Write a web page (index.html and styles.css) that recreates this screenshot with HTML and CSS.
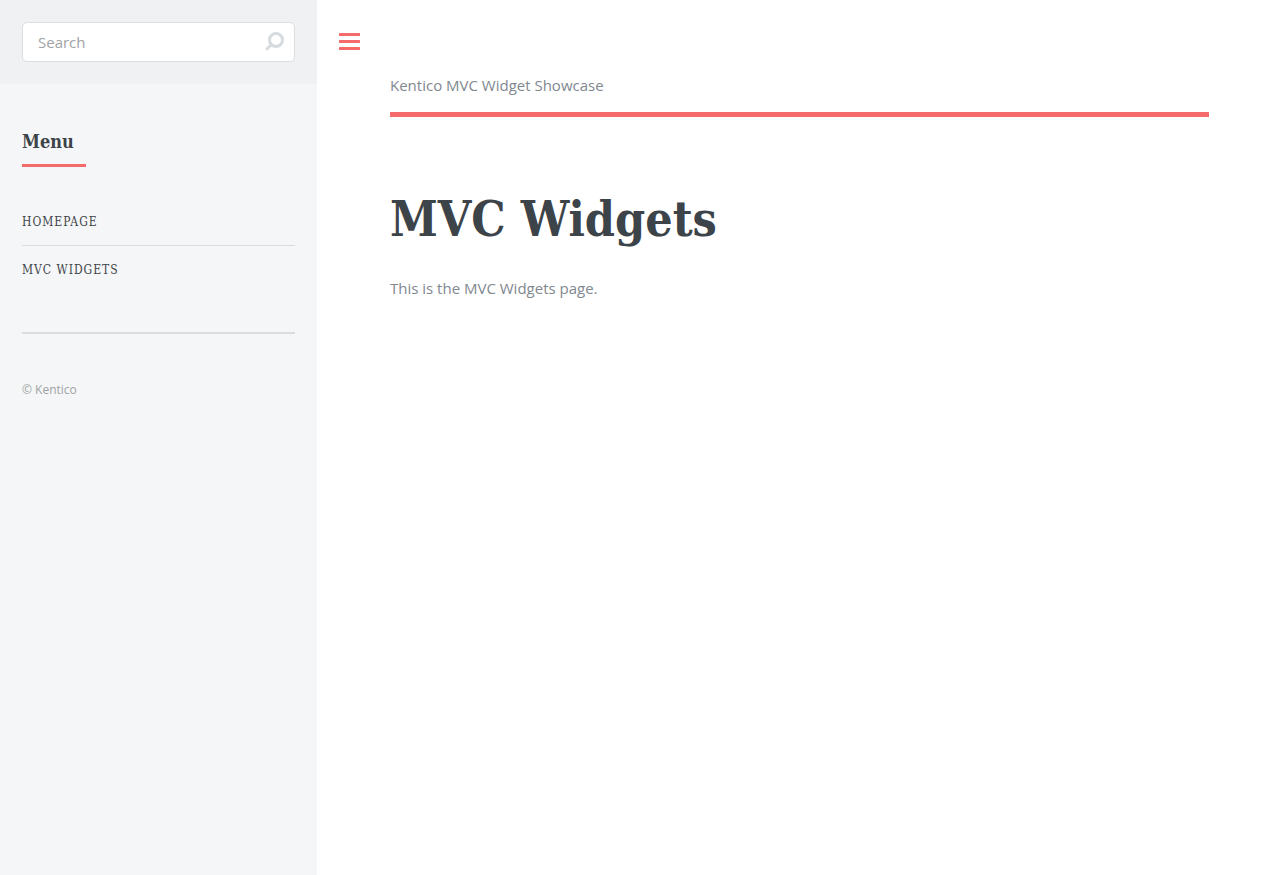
FILE: index.html
```
<!DOCTYPE html>
<html lang="en">
<head>
    <title>MVC Widgets</title>
    <meta charset="UTF-8">
    <meta name="viewport" content="width=device-width, initial-scale=1.0">
    <link rel="stylesheet" href="styles.css">
</head>
<body>
    <div class="wrapper">
        <aside class="sidebar">
            <form class="search" role="search">
                <input type="text" name="query" placeholder="Search" aria-label="Search">
                <svg class="search-icon" viewBox="0 0 20 20" aria-hidden="true">
                    <circle cx="11" cy="8" r="6.5"/>
                    <path d="M6.5 12.5L2 17"/>
                </svg>
            </form>

            <nav class="menu">
                <h2>Menu</h2>
                <ul>
                    <li><a href="index.html">Homepage</a></li>
                    <li><a href="widgets.html">MVC Widgets</a></li>
                </ul>
            </nav>

            <footer class="footer">
                <p>© Kentico</p>
            </footer>
        </aside>

        <main class="main">
            <button class="toggle" type="button" aria-label="Toggle menu">
                <svg viewBox="0 0 21 17" aria-hidden="true">
                    <rect width="21" height="3" rx="0.5"/>
                    <rect y="7" width="21" height="3" rx="0.5"/>
                    <rect y="14" width="21" height="3" rx="0.5"/>
                </svg>
            </button>

            <header class="header">
                <a href="index.html">Kentico MVC Widget Showcase</a>
            </header>

            <section class="content">
                <h1>MVC Widgets</h1>
                <p>This is the MVC Widgets page.</p>
            </section>
        </main>
    </div>
</body>
</html>
```

FILE: styles.css
```
* {
    margin: 0;
    padding: 0;
    box-sizing: border-box;
}

body {
    font-family: "Open Sans", sans-serif;
    font-size: 15px;
    line-height: 24px;
    color: #7f888f;
    background-color: #fff;
}

h1, h2 {
    font-family: "Roboto Slab", "DejaVu Serif Condensed", "DejaVu Serif", serif;
    font-weight: 700;
    color: #3d4449;
}

a {
    color: inherit;
    text-decoration: none;
}

.wrapper {
    display: flex;
    min-height: 100vh;
}

/* Sidebar */
.sidebar {
    flex: 0 0 317px;
    padding: 0 22px;
    background-color: #f5f6f7;
}

.search {
    position: relative;
    margin: 0 -22px;
    padding: 22px;
    background-color: #eff1f2;
}

.search input {
    display: block;
    width: 100%;
    height: 40px;
    padding: 0 40px 0 15px;
    border: 1px solid #dbdfe2;
    border-radius: 5px;
    outline: 0;
    background-color: #fff;
    font: inherit;
    color: #7f888f;
}

.search input:focus {
    border-color: #f56a6a;
}

.search input::placeholder {
    color: #9fa3a6;
    opacity: 1;
}

.search-icon {
    position: absolute;
    top: 32px;
    right: 32px;
    width: 20px;
    height: 20px;
    fill: none;
    stroke: #d7dbde;
    stroke-width: 3;
    stroke-linecap: round;
}

.menu {
    padding: 44px 0;
    border-bottom: 2px solid #dadcde;
}

.menu h2 {
    width: fit-content;
    min-width: 64px;
    margin-bottom: 43px;
    padding-bottom: 9px;
    border-bottom: 3px solid #f56a6a;
    font-size: 18px;
    line-height: 27px;
}

.menu ul {
    list-style: none;
}

.menu li + li {
    border-top: 1px solid #dadcde;
}

.menu li a {
    display: block;
    padding: 12px 0;
    font-family: "Roboto Slab", "DejaVu Serif Condensed", "DejaVu Serif", serif;
    font-size: 12px;
    line-height: 24px;
    letter-spacing: 1px;
    text-transform: uppercase;
    color: #3d4449;
}

.menu li:first-child a {
    padding: 0 0 11px;
}

.menu li:last-child a {
    padding-bottom: 6px;
}

.menu li a:hover {
    color: #f56a6a;
}

.footer {
    padding: 44px 0;
    font-size: 12px;
    color: #9fa3a6;
}

/* Main column */
.main {
    position: relative;
    flex: 1;
    padding: 73px;
}

.toggle {
    position: absolute;
    top: 33px;
    left: 22px;
    border: 0;
    background: none;
    cursor: pointer;
}

.toggle svg {
    display: block;
    width: 21px;
    height: 17px;
    fill: #f56a6a;
}

.header {
    padding-bottom: 15px;
    border-bottom: 5px solid #f56a6a;
}

.content {
    padding: 67px 0;
}

.content h1 {
    margin-bottom: 22px;
    font-size: 48px;
    line-height: 70px;
}
```
